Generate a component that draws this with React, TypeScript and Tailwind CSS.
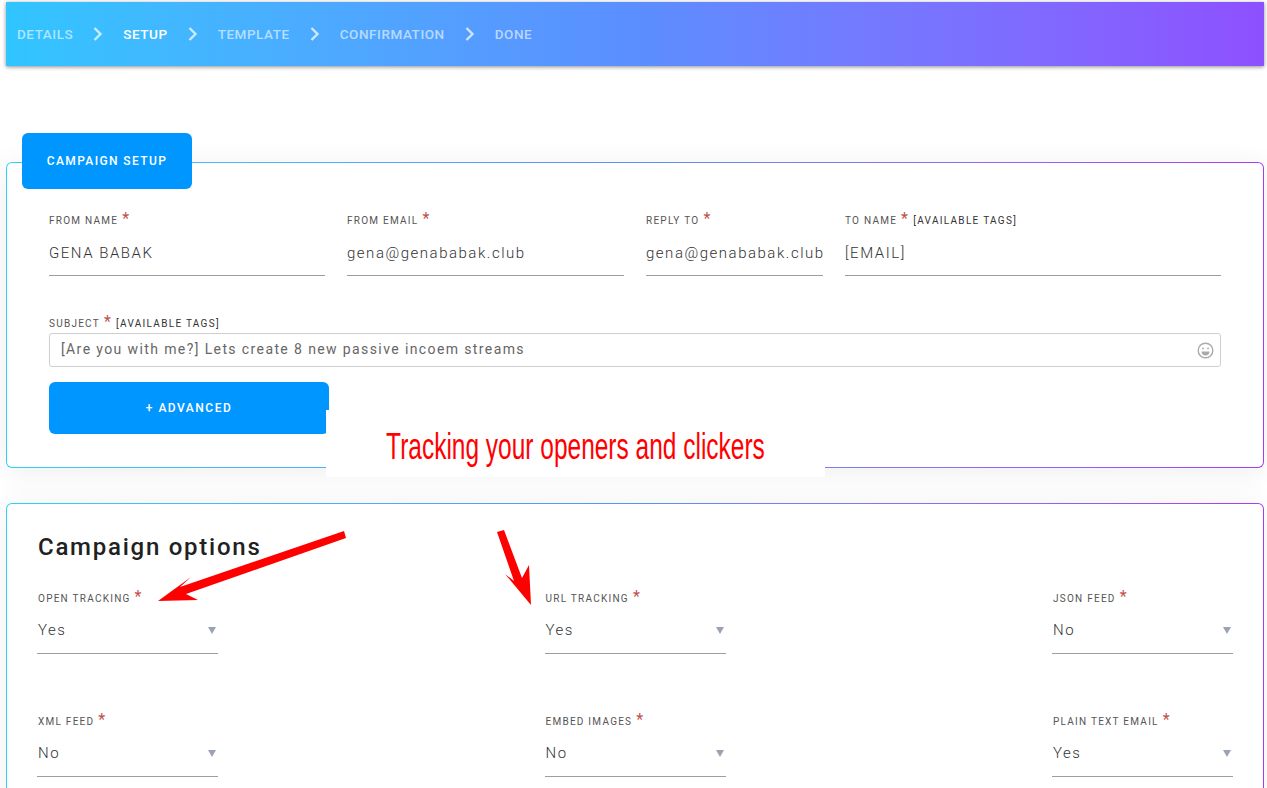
import React from "react";

const Star = () => <span className="text-[#c0504d] text-[16px] leading-none ml-[4px] relative top-[-1px]">*</span>;

function Label({ text, tags }: { text: string; tags?: boolean }) {
  return (
    <div className="h-[20px] flex items-center text-[10px] tracking-[1.25px] uppercase text-[#555] whitespace-nowrap">
      <span>{text}</span>
      <Star />
      {tags && <span className="ml-[4px] text-[#333] tracking-[1.3px]">[Available tags]</span>}
    </div>
  );
}

function Field({ label, value, tags, w }: { label: string; value: string; tags?: boolean; w: string }) {
  return (
    <div className={w}>
      <Label text={label} tags={tags} />
      <div className="h-[46px] border-b border-[#9e9e9e] pt-[13px] text-[15px] font-light leading-[20px] tracking-[1.52px] text-[#333] whitespace-nowrap">{value}</div>
    </div>
  );
}

function Select({ label, value }: { label: string; value: string }) {
  return (
    <div className="w-[181px]">
      <div className="pl-[1px]">
        <Label text={label} />
      </div>
      <div className="h-[46px] border-b border-[#9e9e9e] flex items-center justify-between pl-[1px] pr-[2px] pb-[1px] text-[15px] font-light tracking-[1.5px] text-[#333]">
        <span>{value}</span>
        <svg width="8" height="8" viewBox="0 0 9 9"><path d="M0 1h9L4.5 9z" fill="#9aa3b5" /></svg>
      </div>
    </div>
  );
}

const Chevron = () => (
  <svg width="12" height="16" viewBox="0 0 12 16" className="shrink-0 mx-[19px] mb-[2px]" fill="none">
    <path d="M2.5 2l6 6-6 6" stroke="#fff" strokeOpacity="0.72" strokeWidth="2.4" />
  </svg>
);

export default function App() {
  return (
    <div className="relative h-[788px] overflow-hidden bg-white font-['Roboto',sans-serif]">
      <div className="pt-[2px] pl-[6px] pr-[3px]">
        <div className="h-[64px] bg-gradient-to-r from-[#30c5ff] via-[#5b8eff] to-[#8d50ff] shadow-[0_1px_4px_rgba(0,0,0,0.45)] flex items-center pl-[11px] pt-[1px] text-[13.5px] font-medium tracking-[0.55px] uppercase text-white/60">
          <span>Details</span>
          <Chevron />
          <span className="text-white">Setup</span>
          <Chevron />
          <span>Template</span>
          <Chevron />
          <span>Confirmation</span>
          <Chevron />
          <span>Done</span>
        </div>
      </div>

      <div className="mt-[96px] ml-[6px] mr-[3px] p-px rounded-[6px] bg-gradient-to-r from-[#30d0f5] via-[#5b8eff] to-[#a63cf0] shadow-[0_4px_30px_rgba(0,0,0,0.07)]">
        <div className="h-[304px] bg-white rounded-[5px]">
          <div className="relative -top-[30px] ml-[15px] w-[170px] h-[56px] bg-[#0096ff] rounded-[6px] flex items-center justify-center text-[12px] font-medium tracking-[1.4px] text-white uppercase">
            Campaign Setup
          </div>
          <div className="-mt-[9px] px-[42px]">
            <div className="flex gap-[22px]">
              <Field w="w-[276px]" label="From Name" value="GENA BABAK" />
              <Field w="w-[277px]" label="From Email" value="gena@genababak.club" />
              <Field w="w-[177px]" label="Reply To" value="gena@genababak.club" />
              <Field w="w-[376px]" label="To Name" value="[EMAIL]" tags />
            </div>
            <div className="mt-[37px]">
              <Label text="Subject" tags />
              <div className="h-[34px] border border-[#cfcfcf] rounded-[3px] flex items-center justify-between pl-[11px] pr-[6px] text-[14px] tracking-[1.39px] text-[#666]">
                <span className="pb-[2px]">[Are you with me?] Lets create 8 new passive incoem streams</span>
                <svg width="17" height="17" viewBox="0 0 17 17" fill="none" stroke="#aaa" strokeWidth="1.4">
                  <circle cx="8.5" cy="8.5" r="7.3" />
                  <circle cx="6" cy="6.5" r="0.9" fill="#aaa" stroke="none" />
                  <circle cx="11" cy="6.5" r="0.9" fill="#aaa" stroke="none" />
                  <path d="M4.5 9.5h8c0 2.5-1.8 4-4 4s-4-1.5-4-4z" fill="#aaa" stroke="none" />
                </svg>
              </div>
            </div>
            <div className="mt-[15px] w-[280px] h-[52px] bg-[#0096ff] rounded-[6px] flex items-center justify-center text-[12px] font-medium tracking-[1.5px] text-white uppercase pb-[1px]">
              + Advanced
            </div>
          </div>
        </div>
      </div>

      <div className="mt-[35px] ml-[6px] mr-[3px] p-px pb-0 rounded-t-[6px] bg-gradient-to-r from-[#30d0f5] via-[#5b8eff] to-[#a63cf0] shadow-[0_0_30px_rgba(0,0,0,0.06)]">
        <div className="h-[400px] bg-white rounded-t-[5px] px-[30px] pt-[27px]">
          <h2 className="pl-[1px] text-[24px] leading-[32px] font-medium tracking-[1.75px] text-[#212121]">Campaign options</h2>
          <div className="mt-[25px] flex justify-between">
            <Select label="Open Tracking" value="Yes" />
            <Select label="URL Tracking" value="Yes" />
            <Select label="JSON Feed" value="No" />
          </div>
          <div className="mt-[57px] flex justify-between">
            <Select label="XML Feed" value="No" />
            <Select label="Embed Images" value="No" />
            <Select label="Plain Text Email" value="Yes" />
          </div>
        </div>
      </div>

      {/* annotation pasted over the page */}
      <div className="absolute left-[326px] top-[410px] w-[499px] h-[67px] bg-white flex items-start justify-center overflow-hidden">
        <span className="mt-[12px] text-[36px] leading-[50px] text-[#ff0000] whitespace-nowrap scale-x-[0.68] font-['Liberation_Sans_Narrow','Liberation_Sans',sans-serif]">Tracking your openers and clickers</span>
      </div>
      <svg className="absolute left-0 top-0 pointer-events-none" width="1267" height="788">
        <polygon fill="#ff0000" points="344,531 346,538 186,594 198,600 158,601 191,577 180,587" />
        <polygon fill="#ff0000" points="497,532 504,530 522,578 529,565 531,605 505,574 514,581" />
      </svg>
    </div>
  );
}
